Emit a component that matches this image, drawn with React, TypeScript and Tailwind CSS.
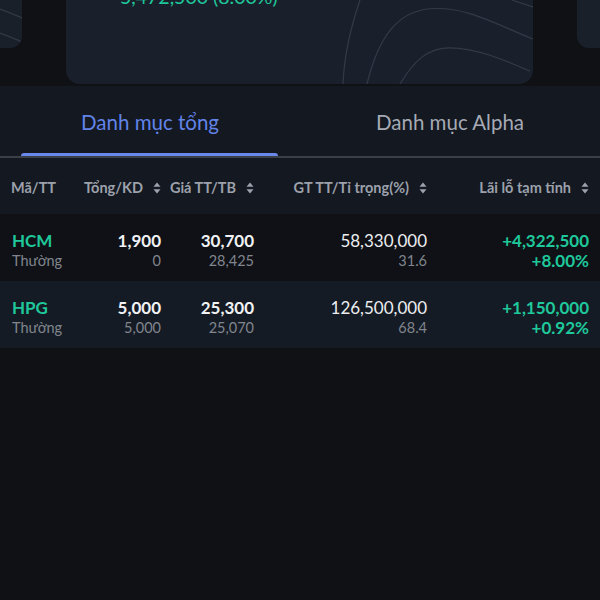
import React from "react";

type Holding = {
  code: string;
  kind: string;
  total: string;
  available: string;
  price: string;
  avg: string;
  value: string;
  weight: string;
  pnl: string;
  pnlPct: string;
};

const holdings: Holding[] = [
  { code: "HCM", kind: "Thường", total: "1,900", available: "0", price: "30,700", avg: "28,425", value: "58,330,000", weight: "31.6", pnl: "+4,322,500", pnlPct: "+8.00%" },
  { code: "HPG", kind: "Thường", total: "5,000", available: "5,000", price: "25,300", avg: "25,070", value: "126,500,000", weight: "68.4", pnl: "+1,150,000", pnlPct: "+0.92%" },
];

function SortIcon() {
  return (
    <svg width="8" height="12" viewBox="0 0 8 12" className="ml-[10px] shrink-0">
      <path d="M4 0.5 L7.5 4.8 H0.5 Z" fill="#9ca1ab" />
      <path d="M4 11.5 L7.5 7.2 H0.5 Z" fill="#9ca1ab" />
    </svg>
  );
}

function Contours() {
  return (
    <svg className="absolute inset-0 h-full w-full" viewBox="0 0 467 86" preserveAspectRatio="none" fill="none">
      <path d="M294 0 C284 30 278 60 277 86" stroke="#323a48" strokeWidth="1.2" />
      <path d="M301 86 C312 40 330 12 364 9 C400 6 430 25 467 40" stroke="#323a48" strokeWidth="1.2" />
      <path d="M334 86 C348 62 362 49 384 49 C410 49 440 62 464 73" stroke="#323a48" strokeWidth="1.2" />
      <path d="M446 0 C454 3 460 5 467 7" stroke="#323a48" strokeWidth="1.2" />
    </svg>
  );
}

export default function App() {
  return (
    <div className="h-[600px] w-[600px] overflow-hidden bg-[#0f1115] font-['Lato','Liberation_Sans',sans-serif]">
      {/* summary cards, scrolled up */}
      <div className="flex h-[86px] items-start justify-between overflow-hidden">
        <div className="relative h-[48px] w-[22px] overflow-hidden rounded-br-[12px] bg-[#1a202a]">
          <svg className="absolute inset-0" width="22" height="48" fill="none">
            <path d="M0 9 C8 12 16 15 22 18" stroke="#323a48" strokeWidth="1.2" />
            <path d="M0 33 C8 36 16 39 22 42" stroke="#323a48" strokeWidth="1.2" />
          </svg>
        </div>
        <div className="relative h-[84px] w-[467px] overflow-hidden rounded-b-[14px] bg-[#1a202b]">
          <Contours />
          <div className="relative -mt-[13px] pl-[54px] text-[19.5px] leading-[20px] text-[#1fc89b]">5,472,500 (8.00%)</div>
        </div>
        <div className="h-[48px] w-[23px] rounded-bl-[12px] bg-[#1a202a]" />
      </div>

      {/* tabs */}
      <div className="bg-[#131821]">
        <div className="flex h-[72px] border-b-2 border-[#3a3f48]">
          <div className="relative flex w-1/2 items-center justify-center pt-[3px] text-[20.5px] text-[#6283e8]">
            Danh mục tổng
            <div className="absolute bottom-0 left-[21px] right-[22px] h-[3px] rounded-t-sm bg-[#6a88ec]" />
          </div>
          <div className="flex w-1/2 items-center justify-center pt-[3px] text-[20.5px] text-[#a5aab4]">Danh mục Alpha</div>
        </div>

        <div className="grid h-[56px] grid-cols-[70px_79px_93px_173px_162px] items-center px-3 pt-[3px] text-[14.5px] font-bold text-[#9ca1ab]">
          <div className="-ml-px">Mã/TT</div>
          <div className="flex items-center justify-end">Tổng/KD<SortIcon /></div>
          <div className="flex items-center justify-end">Giá TT/TB<SortIcon /></div>
          <div className="flex items-center justify-end">GT TT/Tỉ trọng(%)<SortIcon /></div>
          <div className="flex items-center justify-end">Lãi lỗ tạm tính<SortIcon /></div>
        </div>
      </div>

      {holdings.map((h, i) => (
        <div
          key={h.code}
          className={`grid h-[67px] grid-cols-[70px_79px_93px_173px_162px] content-center px-3 pt-[6px] ${i % 2 === 0 ? "bg-[#0f1116]" : "bg-[#151b24]"}`}
        >
          <div className="flex flex-col">
            <span className="text-[17px] leading-[20px] font-bold text-[#1fc89b]">{h.code}</span>
            <span className="text-[14.5px] leading-[20px] text-[#80858e]">{h.kind}</span>
          </div>
          <div className="flex flex-col items-end">
            <span className="text-[17px] leading-[20px] font-bold text-[#f1f2f4]">{h.total}</span>
            <span className="text-[14.5px] leading-[20px] text-[#80858e]">{h.available}</span>
          </div>
          <div className="flex flex-col items-end">
            <span className="text-[17px] leading-[20px] font-bold text-[#f1f2f4]">{h.price}</span>
            <span className="text-[14.5px] leading-[20px] text-[#80858e]">{h.avg}</span>
          </div>
          <div className="flex flex-col items-end">
            <span className="text-[17px] leading-[20px] text-[#eceef1]">{h.value}</span>
            <span className="text-[14.5px] leading-[20px] text-[#80858e]">{h.weight}</span>
          </div>
          <div className="flex flex-col items-end">
            <span className="text-[17px] leading-[20px] font-bold text-[#1fc89b]">{h.pnl}</span>
            <span className="text-[17px] leading-[20px] font-bold text-[#1fc89b]">{h.pnlPct}</span>
          </div>
        </div>
      ))}
    </div>
  );
}
